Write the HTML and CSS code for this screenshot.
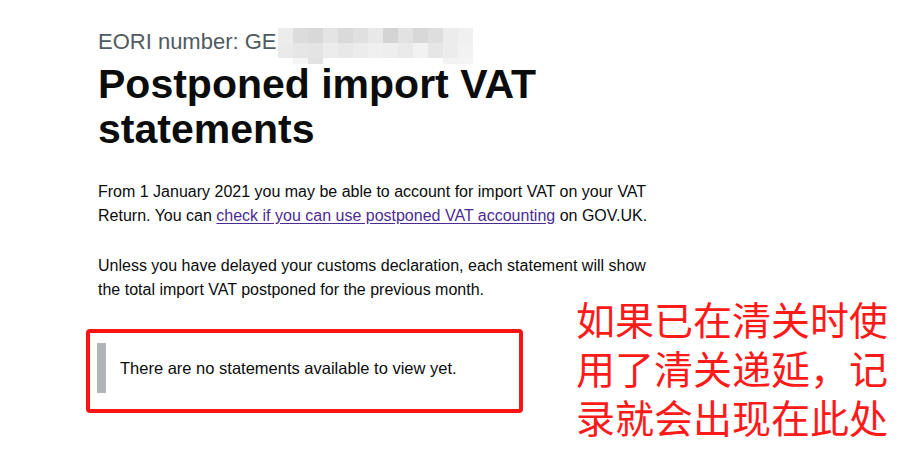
FILE: index.html
```html
<!DOCTYPE html>
<html lang="en">
<head>
<meta charset="utf-8">
<title>Postponed import VAT statements</title>
<link rel="stylesheet" href="styles.css">
</head>
<body>
<main class="page">
  <div class="caption">EORI number: GE<span class="mosaic" aria-hidden="true"><i style="background:#ececec"></i><i style="background:#dcdcdc"></i><i style="background:#d8d8d8"></i><i style="background:#e4e4e4"></i><i style="background:#dadada"></i><i style="background:#e0e0e0"></i><i style="background:#e8e8e8"></i><i style="background:#d4d4d4"></i><i style="background:#e2e2e2"></i><i style="background:#d8d8d8"></i><i style="background:#dedede"></i><i style="background:#ececec"></i><i style="background:#f0f0f0"></i><i style="background:#eaeaea"></i><i style="background:#e6e6e6"></i><i style="background:#e4e4e4"></i><i style="background:#ececec"></i><i style="background:#e8e8e8"></i><i style="background:#ececec"></i><i style="background:#f0f0f0"></i><i style="background:#eeeeee"></i><i style="background:#eaeaea"></i><i style="background:#f2f2f2"></i><i style="background:#e6e6e6"></i><i style="background:#ececec"></i><i style="background:#f2f2f2"></i><i style="background:transparent"></i><i style="background:#f4f4f4"></i><i style="background:#e2e2e2"></i><i style="background:transparent"></i><i style="background:transparent"></i><i style="background:transparent"></i><i style="background:transparent"></i><i style="background:transparent"></i><i style="background:transparent"></i><i style="background:transparent"></i><i style="background:transparent"></i><i style="background:#f2f2f2"></i><i style="background:#f4f4f4"></i></span></div>
  <h1 class="title">Postponed import VAT statements</h1>
  <p class="body">From 1 January 2021 you may be able to account for import VAT on your VAT Return. You can <a class="link" href="#">check if you can use postponed VAT accounting</a> on GOV.UK.</p>
  <p class="body">Unless you have delayed your customs declaration, each statement will show the total import VAT postponed for the previous month.</p>
  <div class="highlight">
    <div class="inset">There are no statements available to view yet.</div>
  </div>
</main>
<p class="annotation">如果已在清关时使用了清关递延，记录就会出现在此处</p>
</body>
</html>
```
FILE: styles.css
```css
html, body {
  margin: 0;
  padding: 0;
  background: #ffffff;
}
body {
  width: 903px;
  height: 457px;
  overflow: hidden;
  position: relative;
  font-family: "Liberation Sans", Arial, sans-serif;
  color: #0b0c0c;
}
.page {
  padding: 28px 0 0 98px;
  width: 600px;
}
.caption {
  position: relative;
  font-size: 22px;
  line-height: 28px;
  color: #505a5f;
}
.mosaic {
  position: absolute;
  left: 180px;
  top: 0;
  width: 195px;
  display: grid;
  grid-template-columns: repeat(13, 15px);
  grid-template-rows: 15px 15px 6px;
}
.mosaic i {
  display: block;
}
.title {
  position: relative;
  margin: 6px 0 0;
  font-size: 41px;
  line-height: 45px;
  font-weight: 700;
  width: 470px;
}
.body {
  margin: 28px 0 0;
  font-size: 16px;
  line-height: 24px;
  width: 563px;
}
.body + .body {
  margin-top: 26px;
}
.link {
  color: #4c2c92;
  text-decoration: underline;
  text-underline-offset: 2px;
}
.highlight {
  margin: 27px 0 0 -12px;
  border: 4px solid #ff1212;
  border-radius: 4px;
  padding: 10px 0 0 7px;
  box-sizing: content-box;
  width: 422px;
  height: 66px;
}
.inset {
  border-left: 9px solid #b1b4b6;
  padding-left: 14px;
  height: 50px;
  display: flex;
  align-items: center;
  font-size: 16.5px;
}
.annotation {
  position: absolute;
  left: 576px;
  top: 294px;
  width: 320px;
  margin: 0;
  font-family: "Noto Sans CJK SC", sans-serif;
  font-size: 39px;
  line-height: 49px;
  color: #ff1a1a;
}
```
